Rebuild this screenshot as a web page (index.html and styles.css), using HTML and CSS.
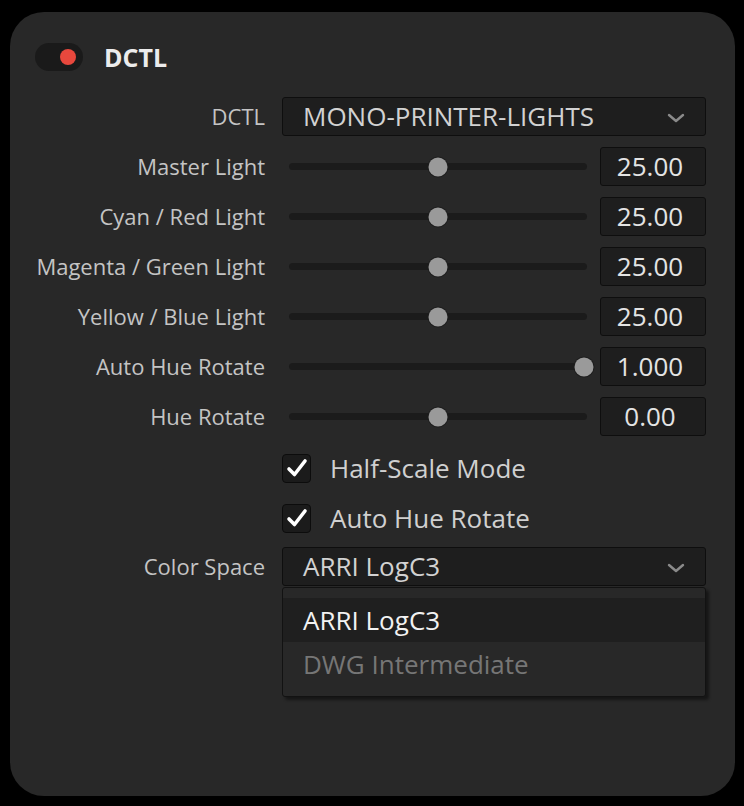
FILE: index.html
```html
<!DOCTYPE html>
<html>
<head>
<meta charset="utf-8">
<link rel="stylesheet" href="styles.css">
</head>
<body>
<div class="panel">
  <div class="header">
    <div class="toggle"><span class="dot"></span></div>
    <div class="title">DCTL</div>
  </div>
  <div class="grid">
    <div class="label">DCTL</div>
    <div class="select">
      <span class="select-text">MONO-PRINTER-LIGHTS</span>
      <svg class="chev" width="18" height="10" viewBox="0 0 18 10"><path d="M2 2 L9 8 L16 2" fill="none" stroke="#8a8a8a" stroke-width="2.4" stroke-linecap="round" stroke-linejoin="round"/></svg>
    </div>

    <div class="label">Master Light</div>
    <div class="slider-row"><div class="track"><span class="thumb" style="left:50%"></span></div><div class="value">25.00</div></div>

    <div class="label">Cyan / Red Light</div>
    <div class="slider-row"><div class="track"><span class="thumb" style="left:50%"></span></div><div class="value">25.00</div></div>

    <div class="label">Magenta / Green Light</div>
    <div class="slider-row"><div class="track"><span class="thumb" style="left:50%"></span></div><div class="value">25.00</div></div>

    <div class="label">Yellow / Blue Light</div>
    <div class="slider-row"><div class="track"><span class="thumb" style="left:50%"></span></div><div class="value">25.00</div></div>

    <div class="label">Auto Hue Rotate</div>
    <div class="slider-row"><div class="track"><span class="thumb" style="left:99%"></span></div><div class="value">1.000</div></div>

    <div class="label">Hue Rotate</div>
    <div class="slider-row"><div class="track"><span class="thumb" style="left:50%"></span></div><div class="value">0.00</div></div>

    <div class="label"></div>
    <div class="check-row">
      <span class="checkbox"><svg width="22" height="20" viewBox="0 0 22 20"><path d="M3 11 L8.5 16.5 L19 3" fill="none" stroke="#fff" stroke-width="3.6" stroke-linecap="round" stroke-linejoin="round"/></svg></span>
      <span class="check-text">Half-Scale Mode</span>
    </div>

    <div class="label"></div>
    <div class="check-row">
      <span class="checkbox"><svg width="22" height="20" viewBox="0 0 22 20"><path d="M3 11 L8.5 16.5 L19 3" fill="none" stroke="#fff" stroke-width="3.6" stroke-linecap="round" stroke-linejoin="round"/></svg></span>
      <span class="check-text">Auto Hue Rotate</span>
    </div>

    <div class="label">Color Space</div>
    <div class="select-wrap">
      <div class="select">
        <span class="select-text">ARRI LogC3</span>
        <svg class="chev" width="18" height="10" viewBox="0 0 18 10"><path d="M2 2 L9 8 L16 2" fill="none" stroke="#8a8a8a" stroke-width="2.4" stroke-linecap="round" stroke-linejoin="round"/></svg>
      </div>
      <div class="menu">
        <div class="menu-item active">ARRI LogC3</div>
        <div class="menu-item dim">DWG Intermediate</div>
      </div>
    </div>
  </div>
</div>
</body>
</html>
```

FILE: styles.css
```css
* { box-sizing: border-box; }
html, body { margin: 0; padding: 0; background: #000; }
body {
  width: 744px;
  height: 806px;
  font-family: "Open Sans", "Noto Sans", sans-serif;
  overflow: hidden;
}
.panel {
  margin: 12px 9px 0 10px;
  width: 725px;
  height: 784px;
  background: #282828;
  border-radius: 34px;
  padding-top: 30px;
}
.header {
  display: flex;
  align-items: center;
  padding-left: 25px;
  height: 29px;
}
.toggle {
  width: 48px;
  height: 28px;
  border-radius: 14px;
  background: #1a1a1a;
  position: relative;
}
.dot {
  position: absolute;
  left: 25px;
  top: 6px;
  width: 16px;
  height: 16px;
  border-radius: 50%;
  background: #e8483d;
}
.title {
  margin-left: 21px;
  font-size: 25px;
  font-weight: 700;
  color: #ececec;
}
.grid {
  margin-top: 26px;
  display: grid;
  grid-template-columns: 255px 424px;
  column-gap: 17px;
  row-gap: 11px;
  grid-auto-rows: 39px;
}
.label {
  text-align: right;
  font-size: 22px;
  color: #c4c4c4;
  line-height: 39px;
  white-space: nowrap;
}
.select {
  height: 39px;
  background: #1e1e1e;
  border: 1px solid #0e0e0e;
  border-radius: 3px;
  display: flex;
  align-items: center;
  justify-content: space-between;
  padding: 0 20px 0 20px;
}
.select-text {
  font-size: 26px;
  line-height: 37px;
  color: #d2d2d2;
}
.chev { display: block; margin-top: 2px; }
.slider-row {
  display: flex;
  align-items: center;
}
.track {
  flex: 1;
  margin: 0 13px 0 7px;
  height: 7px;
  border-radius: 4px;
  background: #1b1b1b;
  position: relative;
}
.thumb {
  position: absolute;
  top: 50%;
  width: 19px;
  height: 19px;
  border-radius: 50%;
  background: #9a9a9a;
  box-shadow: 0 0 0 1px #1e1e1e;
  transform: translate(-50%, -50%);
}
.value {
  width: 106px;
  height: 39px;
  background: #1e1e1e;
  border: 1px solid #0e0e0e;
  border-radius: 3px;
  font-size: 26px;
  color: #e4e4e4;
  text-align: center;
  line-height: 37px;
  padding-right: 6px;
}
.check-row {
  display: flex;
  align-items: center;
  padding-top: 3px;
}
.checkbox {
  width: 29px;
  height: 29px;
  border-radius: 4px;
  background: #1b1b1b;
  border: 1px solid #0c0c0c;
  display: flex;
  align-items: center;
  justify-content: center;
}
.check-text {
  margin-left: 19px;
  font-size: 26px;
  color: #d0d0d0;
}
.select-wrap { position: relative; }
.menu {
  position: absolute;
  left: 0;
  top: 40px;
  width: 424px;
  height: 110px;
  background: #282828;
  border: 1px solid #121212;
  border-radius: 3px;
  padding-top: 10px;
  box-shadow: 3px 3px 3px rgba(0,0,0,0.45);
}
.menu-item {
  height: 44px;
  line-height: 44px;
  padding-left: 20px;
  font-size: 26px;
}
.menu-item.active { background: #1f1f1f; color: #f2f2f2; }
.menu-item.dim { color: #767676; }
```
